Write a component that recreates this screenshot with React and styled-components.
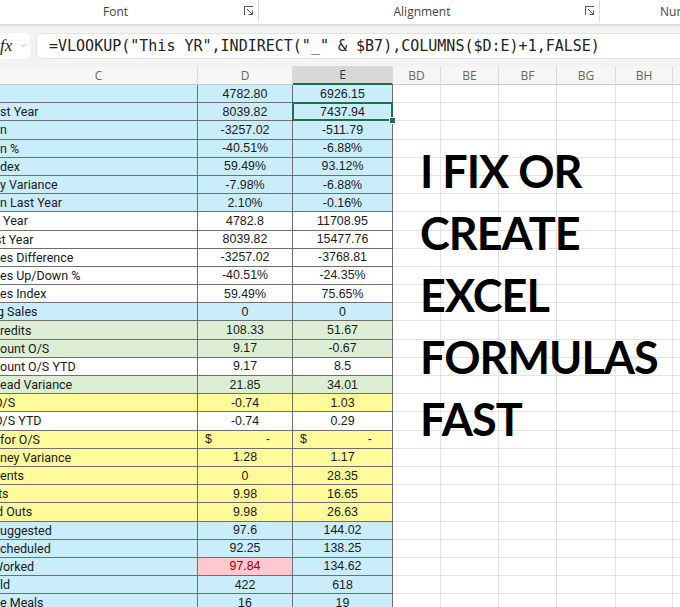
import React from 'react';
import styled, { createGlobalStyle } from 'styled-components';

const GlobalStyle = createGlobalStyle`
  html, body { margin: 0; padding: 0; background: #fff; }
  body { font-family: "Liberation Sans", Arial, sans-serif; }
`;

const FILLS = {
  blue: '#c9edfb',
  green: '#dcefd4',
  yellow: '#fffb9a',
  white: '#ffffff',
  bad: '#ffc7ce',
};

const Window = styled.div`
  position: relative;
  width: 680px;
  height: 607px;
  overflow: hidden;
  background: #f3f3f3;
`;

/* ---------- ribbon group labels ---------- */

const Ribbon = styled.div`
  position: relative;
  z-index: 2;
  display: flex;
  height: 24px;
  background: #fff;
  box-shadow: 0 1px 3px rgba(0, 0, 0, 0.16);
`;

const Group = styled.div`
  display: flex;
  align-items: center;
  flex: 0 0 ${(p) => p.$width}px;
  margin-left: ${(p) => p.$offset || 0}px;
  border-right: ${(p) => (p.$last ? 'none' : '1px solid #dcdcdc')};
  height: 22px;
  padding-right: ${(p) => (p.$last ? 0 : 4)}px;
  box-sizing: border-box;
  overflow: hidden;
`;

const GroupLabel = styled.span`
  flex: 1;
  text-align: ${(p) => (p.$left ? 'left' : 'center')};
  padding-left: ${(p) => (p.$left ? 60 : 0)}px;
  font-family: "Open Sans", "Noto Sans", sans-serif;
  font-size: 12px;
  color: #444;
  white-space: nowrap;
`;

const Launcher = () => (
  <svg width="10" height="10" viewBox="0 0 10 10" fill="none" stroke="#555" strokeWidth="1">
    <path d="M0.5 9 V0.5 H9" />
    <path d="M3 3 L8.5 8.5" />
    <path d="M4.5 8.5 H8.5 V4.5" />
  </svg>
);

/* ---------- formula bar ---------- */

const FormulaBar = styled.div`
  display: flex;
  align-items: center;
  height: 42px;
  padding: 1px 0 0;
  box-sizing: border-box;
`;

const NameBox = styled.div`
  display: flex;
  align-items: center;
  justify-content: flex-end;
  gap: 9px;
  width: 30px;
  height: 26px;
  padding-right: 3px;
  box-sizing: border-box;
  background: #fff;
  border-radius: 0 5px 5px 0;
  overflow: hidden;
`;

const Fx = styled.span`
  font-family: "Liberation Serif", "Times New Roman", serif;
  font-style: italic;
  font-size: 17px;
  color: #222;
  white-space: nowrap;
`;

const FormulaInput = styled.div`
  flex: 1;
  margin-left: 6px;
  margin-right: -12px;
  height: 26px;
  display: flex;
  align-items: center;
  padding-left: 12px;
  background: #fff;
  border-radius: 5px;
  border: 1px solid #e4e4e4;
  box-sizing: border-box;
  font-family: "DejaVu Sans Mono", "Liberation Mono", monospace;
  font-size: 15px;
  color: #222;
  white-space: nowrap;
  overflow: hidden;
`;

/* ---------- sheet grid ---------- */

const COLS = '198px 95px 100px 48px 58px 58px 59px 57px 60px';

const Sheet = styled.div`
  display: grid;
  grid-template-columns: ${COLS};
  grid-template-rows: 19px;
  grid-auto-rows: 18.2px;
  background: #fff;
`;

const Head = styled.div`
  display: flex;
  align-items: center;
  justify-content: center;
  background: ${(p) => (p.$active ? '#d8d8d8' : '#f6f6f6')};
  border-right: 1px solid #dadada;
  border-bottom: ${(p) => (p.$active ? '2px solid #1e7145' : '1px solid #c9c9c9')};
  box-sizing: border-box;
  font-family: "Open Sans", "Noto Sans", sans-serif;
  font-size: 12px;
  color: ${(p) => (p.$active ? '#333' : '#666')};
`;

const Cell = styled.div`
  position: relative;
  display: flex;
  align-items: center;
  justify-content: center;
  background: ${(p) => FILLS[p.$fill] || '#fff'};
  border-right: 1px solid ${(p) => (p.$data ? '#6f6f6f' : '#e2e2e2')};
  border-bottom: 1px solid ${(p) => (p.$data ? '#6f6f6f' : '#e2e2e2')};
  box-sizing: border-box;
  font-size: 12.4px;
  color: ${(p) => (p.$fill === 'bad' ? '#9c0006' : '#1a1a1a')};
  white-space: nowrap;
  overflow: ${(p) => (p.$selected ? 'visible' : 'hidden')};

  ${(p) =>
    p.$selected &&
    `
    z-index: 1;
    &::after {
      content: '';
      position: absolute;
      inset: -1px -1px -1px -1px;
      border: 2px solid #1e7145;
    }
    &::before {
      content: '';
      position: absolute;
      right: -4px;
      bottom: -4px;
      width: 5px;
      height: 5px;
      background: #1e7145;
      border: 1px solid #fff;
      z-index: 2;
    }
  `}
`;

const LabelCell = styled(Cell)`
  justify-content: flex-start;
  font-family: Roboto, "Noto Sans", sans-serif;
  font-size: 12.5px;
  text-indent: ${(p) => -(p.$clip || 0)}px;
`;

const Accounting = styled(Cell)`
  justify-content: space-between;
  padding: 0 ${(p) => p.$right}px 0 7px;
`;

/* ---------- floating text box ---------- */

const Callout = styled.div`
  position: absolute;
  left: 420px;
  top: 140px;
  z-index: 3;
  font-family: Lato, "Open Sans", sans-serif;
  font-weight: 700;
  font-size: 45px;
  letter-spacing: -1px;
  line-height: 62px;
  color: #000;
  white-space: nowrap;
`;

const ROWS = [
  { fill: 'blue', label: '', d: '4782.80', e: '6926.15' },
  { fill: 'blue', label: 'st Year', d: '8039.82', e: '7437.94', sel: true },
  { fill: 'blue', label: 'n', d: '-3257.02', e: '-511.79' },
  { fill: 'blue', label: 'n %', d: '-40.51%', e: '-6.88%' },
  { fill: 'blue', label: 'dex', d: '59.49%', e: '93.12%' },
  { fill: 'blue', label: 'y Variance', d: '-7.98%', e: '-6.88%' },
  { fill: 'blue', label: 'n Last Year', d: '2.10%', e: '-0.16%' },
  { fill: 'white', label: '\u00a0Year', d: '4782.8', e: '11708.95' },
  { fill: 'white', label: 'st Year', clip: 5, d: '8039.82', e: '15477.76' },
  { fill: 'white', label: 'es Difference', d: '-3257.02', e: '-3768.81' },
  { fill: 'white', label: 'es Up/Down %', d: '-40.51%', e: '-24.35%' },
  { fill: 'white', label: 'es Index', d: '59.49%', e: '75.65%' },
  { fill: 'blue', label: 'g Sales', clip: 3, d: '0', e: '0' },
  { fill: 'green', label: 'redits', d: '108.33', e: '51.67' },
  { fill: 'green', label: 'ount O/S', d: '9.17', e: '-0.67' },
  { fill: 'white', label: 'ount O/S YTD', d: '9.17', e: '8.5' },
  { fill: 'green', label: 'ead Variance', d: '21.85', e: '34.01' },
  { fill: 'yellow', label: 'O/S', clip: 6, d: '-0.74', e: '1.03' },
  { fill: 'white', label: 'O/S YTD', clip: 6, d: '-0.74', e: '0.29' },
  { fill: 'yellow', label: 'for O/S', money: true },
  { fill: 'yellow', label: 'ney Variance', d: '1.28', e: '1.17' },
  { fill: 'yellow', label: 'ents', d: '0', e: '28.35' },
  { fill: 'yellow', label: 'ts', clip: 2, d: '9.98', e: '16.65' },
  { fill: 'yellow', label: 'd Outs', clip: 4, d: '9.98', e: '26.63' },
  { fill: 'blue', label: 'uggested', d: '97.6', e: '144.02' },
  { fill: 'blue', label: 'cheduled', d: '92.25', e: '138.25' },
  { fill: 'blue', label: 'Worked', clip: 8, d: '97.84', e: '134.62', dFill: 'bad' },
  { fill: 'blue', label: 'ld', d: '422', e: '618' },
  { fill: 'blue', label: 'e Meals', d: '16', e: '19' },
];

const EMPTY_COLS = ['BD', 'BE', 'BF', 'BG', 'BH', 'BI'];

export default function App() {
  return (
    <Window>
      <GlobalStyle />
      <Ribbon>
        <Group $width={272} $offset={-13}>
          <GroupLabel>Font</GroupLabel>
          <Launcher />
        </Group>
        <Group $width={341}>
          <GroupLabel>Alignment</GroupLabel>
          <Launcher />
        </Group>
        <Group $width={120} $last>
          <GroupLabel $left>Number</GroupLabel>
        </Group>
      </Ribbon>

      <FormulaBar>
        <NameBox>
          <Fx>fx</Fx>
          <svg width="8" height="5" viewBox="0 0 8 5" fill="none" stroke="#9a9a9a" strokeWidth="1">
            <path d="M0.5 0.5 L4 4 L7.5 0.5" />
          </svg>
        </NameBox>
        <FormulaInput>=VLOOKUP("This YR",INDIRECT("_" &amp; $B7),COLUMNS($D:E)+1,FALSE)</FormulaInput>
      </FormulaBar>

      <Sheet>
        <Head>C</Head>
        <Head>D</Head>
        <Head $active>E</Head>
        {EMPTY_COLS.map((c) => (
          <Head key={c}>{c}</Head>
        ))}

        {ROWS.map((r, i) => (
          <React.Fragment key={i}>
            <LabelCell $data $fill={r.fill} $clip={r.clip}>
              {r.label}
            </LabelCell>
            {r.money ? (
              <>
                <Accounting $data $fill={r.fill} $right={22}>
                  <span>$</span>
                  <span>-</span>
                </Accounting>
                <Accounting $data $fill={r.fill} $right={20}>
                  <span>$</span>
                  <span>-</span>
                </Accounting>
              </>
            ) : (
              <>
                <Cell $data $fill={r.dFill || r.fill}>{r.d}</Cell>
                <Cell $data $fill={r.fill} $selected={r.sel}>{r.e}</Cell>
              </>
            )}
            {EMPTY_COLS.map((c) => (
              <Cell key={c} />
            ))}
          </React.Fragment>
        ))}
      </Sheet>

      <Callout>
        I FIX OR
        <br />
        CREATE
        <br />
        EXCEL
        <br />
        FORMULAS
        <br />
        FAST
      </Callout>
    </Window>
  );
}
